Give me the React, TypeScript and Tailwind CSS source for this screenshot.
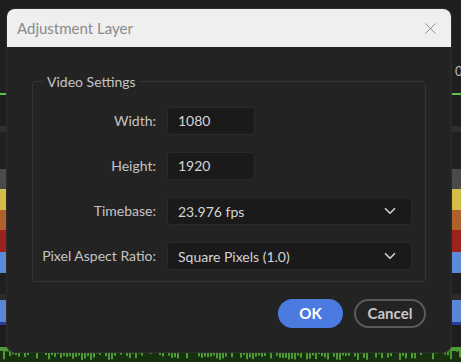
import { ChevronDown, X } from "lucide-react";

const bands = [
  { h: 93, c: "bg-[#1f1f1f]" },
  { h: 2, c: "bg-[#5cc04a]" },
  { h: 31, c: "bg-[#1e1e1e]" },
  { h: 6, c: "bg-[#2e2e2e]" },
  { h: 37, c: "bg-[#202020]" },
  { h: 20, c: "bg-[#4a4a4a]" },
  { h: 21, c: "bg-[#d4bd47]" },
  { h: 20, c: "bg-[#b0602a]" },
  { h: 22, c: "bg-[#9c221c]" },
  { h: 21, c: "bg-[#5b8ad8]" },
  { h: 21, c: "bg-[#1f1f1f]" },
  { h: 6, c: "bg-[#2b2b2b]" },
  { h: 22, c: "bg-[#5b86d6]" },
  { h: 3, c: "bg-[#2a3b9a]" },
  { h: 22, c: "bg-[#1d1d1d]" },
];

function Waveform() {
  const bars = Array.from({ length: 154 }, (_, i) => {
    const v = Math.abs(Math.sin(i * 12.9898) * 43758.5453) % 1;
    return 4 + v * 9;
  });
  return (
    <svg width="461" height="15" className="block bg-[#173010]">
      <rect x="0" y="0" width="461" height="4" fill="#4f9a36" />
      {bars.map((h, i) => (
        <rect key={i} x={i * 3} y={0} width={2} height={h} fill="#4f9a36" />
      ))}
    </svg>
  );
}

function Field({ label, children }: { label: string; children: React.ReactNode }) {
  return (
    <>
      <div className="text-right text-[14px] text-[#c4c4c4] leading-[28px]">{label}</div>
      <div>{children}</div>
    </>
  );
}

function Select({ value }: { value: string }) {
  return (
    <div className="h-[28px] w-full rounded-[4px] bg-[#1a1a1a] border border-[#2a2a2a] flex items-center justify-between pl-[10px] pr-[12px] text-[14px] text-[#d4d4d4]">
      <span>{value}</span>
      <ChevronDown className="h-[18px] w-[18px] text-[#d0d0d0]" strokeWidth={2.2} />
    </div>
  );
}

export default function App() {
  return (
    <div
      className="relative w-[461px] h-[362px] overflow-hidden bg-[#1f1f1f]"
      style={{ fontFamily: "Lato, 'Noto Sans', sans-serif" }}
    >
      <div className="absolute inset-0 flex flex-col">
        {bands.map((b, i) => (
          <div key={i} className={b.c} style={{ height: b.h }} />
        ))}
        <Waveform />
      </div>
      <div className="absolute left-[455px] top-[62px] text-[13px] text-[#bbbbbb]">0</div>

      <div className="relative ml-[6px] mt-[8px] w-[446px] h-[345px] rounded-[9px] overflow-hidden bg-[#232323] border border-[#2e2e2e] flex flex-col">
        <div className="h-[38px] shrink-0 bg-[#efefef] flex items-center justify-between pl-[10px] pr-[11px]">
          <span className="text-[15px] text-[#8a8a8a]">Adjustment Layer</span>
          <X className="h-[19px] w-[19px] text-[#8a8a8a]" strokeWidth={1.2} />
        </div>
        <div className="flex-1 px-[25px] pt-[24px]">
          <fieldset className="border border-[#353535] rounded-[4px] pb-[11px] pr-[13px]">
            <legend className="ml-[10px] px-[4px] text-[14px] text-[#c4c4c4]">Video Settings</legend>
            <div className="grid grid-cols-[123px_1fr] gap-x-[11px] gap-y-[17px] mt-[15px]">
              <Field label="Width:">
                <div className="h-[28px] w-[88px] rounded-[4px] bg-[#1a1a1a] border border-[#2a2a2a] pl-[10px] text-[14px] leading-[26px] text-[#d4d4d4]">1080</div>
              </Field>
              <Field label="Height:">
                <div className="h-[28px] w-[88px] rounded-[4px] bg-[#1a1a1a] border border-[#2a2a2a] pl-[10px] text-[14px] leading-[26px] text-[#d4d4d4]">1920</div>
              </Field>
              <Field label="Timebase:">
                <Select value="23.976 fps" />
              </Field>
              <Field label="Pixel Aspect Ratio:">
                <Select value="Square Pixels (1.0)" />
              </Field>
            </div>
          </fieldset>
          <div className="flex justify-end gap-[11px] mt-[17px]">
            <button className="h-[29px] w-[65px] rounded-full bg-[#4b7be0] text-white text-[15px] font-bold">OK</button>
            <button className="h-[29px] w-[72px] rounded-full border-2 border-[#5a5a5a] text-[#c8c8c8] text-[15px] font-bold">Cancel</button>
          </div>
        </div>
      </div>
    </div>
  );
}
